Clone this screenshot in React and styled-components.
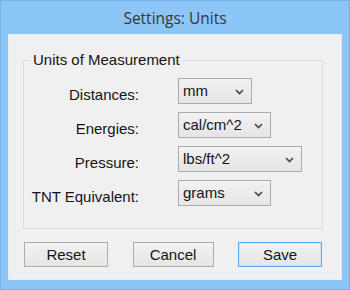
import React from "react";
import styled, { createGlobalStyle } from "styled-components";

const GlobalStyle = createGlobalStyle`
  html, body {
    margin: 0;
    padding: 0;
    background: #8cc6f7;
  }
  * {
    box-sizing: border-box;
  }
`;

const Window = styled.div`
  width: 350px;
  height: 290px;
  display: flex;
  flex-direction: column;
  padding: 0 7px 9px 7px;
  background: #8cc6f7;
  border: 1px solid #78b2e8;
  overflow: hidden;
`;

const TitleBar = styled.div`
  height: 33px;
  display: flex;
  align-items: center;
  justify-content: center;
  font-family: "Open Sans", "Noto Sans", sans-serif;
  font-size: 15.5px;
  color: #363636;
`;

const Client = styled.div`
  flex: 1;
  display: flex;
  flex-direction: column;
  padding: 16px 18px 0 14px;
  background: #f0f0f0;
  border: 1px solid #e3ecf5;
  font-family: "Liberation Sans", Arial, sans-serif;
  font-size: 15px;
  color: #141414;
`;

const GroupBox = styled.fieldset`
  margin: 0;
  padding: 9px 7px 22px 7px;
  border: 1px solid #dcdcdc;
  min-width: 0;

  legend {
    padding: 0 2px;
    line-height: 18px;
  }
`;

const Rows = styled.div`
  display: grid;
  grid-template-columns: 108px 1fr;
  column-gap: 39px;
  row-gap: 8px;
`;

const Label = styled.label`
  align-self: start;
  padding-top: 8px;
  line-height: 18px;
  text-align: right;
  white-space: nowrap;
`;

const Combo = styled.div`
  width: ${(p) => p.$width}px;
  height: 26px;
  display: flex;
  align-items: center;
  justify-content: space-between;
  padding: 0 7px 0 4px;
  border: 1px solid #acacac;
  background: linear-gradient(#f2f2f2, #e5e5e5);
  line-height: 18px;
  white-space: nowrap;

  svg {
    flex: none;
    margin-top: 2px;
  }
`;

const ButtonRow = styled.div`
  display: flex;
  justify-content: space-between;
  margin-top: 13px;
  padding: 0 1px;
`;

const Button = styled.button`
  width: ${(p) => p.$width}px;
  height: 25px;
  padding: 0;
  border: 1px solid ${(p) => (p.$default ? "#66a6ec" : "#acacac")};
  background: linear-gradient(#f2f2f2, #e5e5e5);
  font-family: "Liberation Sans", Arial, sans-serif;
  font-size: 15px;
  color: #141414;
  box-shadow: ${(p) => (p.$default ? "inset 0 0 0 1px #cfe4fa" : "none")};
`;

const Chevron = () => (
  <svg width="9" height="6" viewBox="0 0 9 6">
    <path d="M1 1 L4.5 4.5 L8 1" fill="none" stroke="#4a4a4a" strokeWidth="1.7" />
  </svg>
);

const fields = [
  { label: "Distances:", value: "mm", width: 74 },
  { label: "Energies:", value: "cal/cm^2", width: 93 },
  { label: "Pressure:", value: "lbs/ft^2", width: 124 },
  { label: "TNT Equivalent:", value: "grams", width: 93 },
];

export default function App() {
  return (
    <>
      <GlobalStyle />
      <Window>
        <TitleBar>Settings: Units</TitleBar>
        <Client>
          <GroupBox>
            <legend>Units of Measurement</legend>
            <Rows>
              {fields.map((f) => (
                <React.Fragment key={f.label}>
                  <Label>{f.label}</Label>
                  <Combo $width={f.width}>
                    <span>{f.value}</span>
                    <Chevron />
                  </Combo>
                </React.Fragment>
              ))}
            </Rows>
          </GroupBox>
          <ButtonRow>
            <Button $width={84}>Reset</Button>
            <Button $width={81}>Cancel</Button>
            <Button $width={84} $default>
              Save
            </Button>
          </ButtonRow>
        </Client>
      </Window>
    </>
  );
}
